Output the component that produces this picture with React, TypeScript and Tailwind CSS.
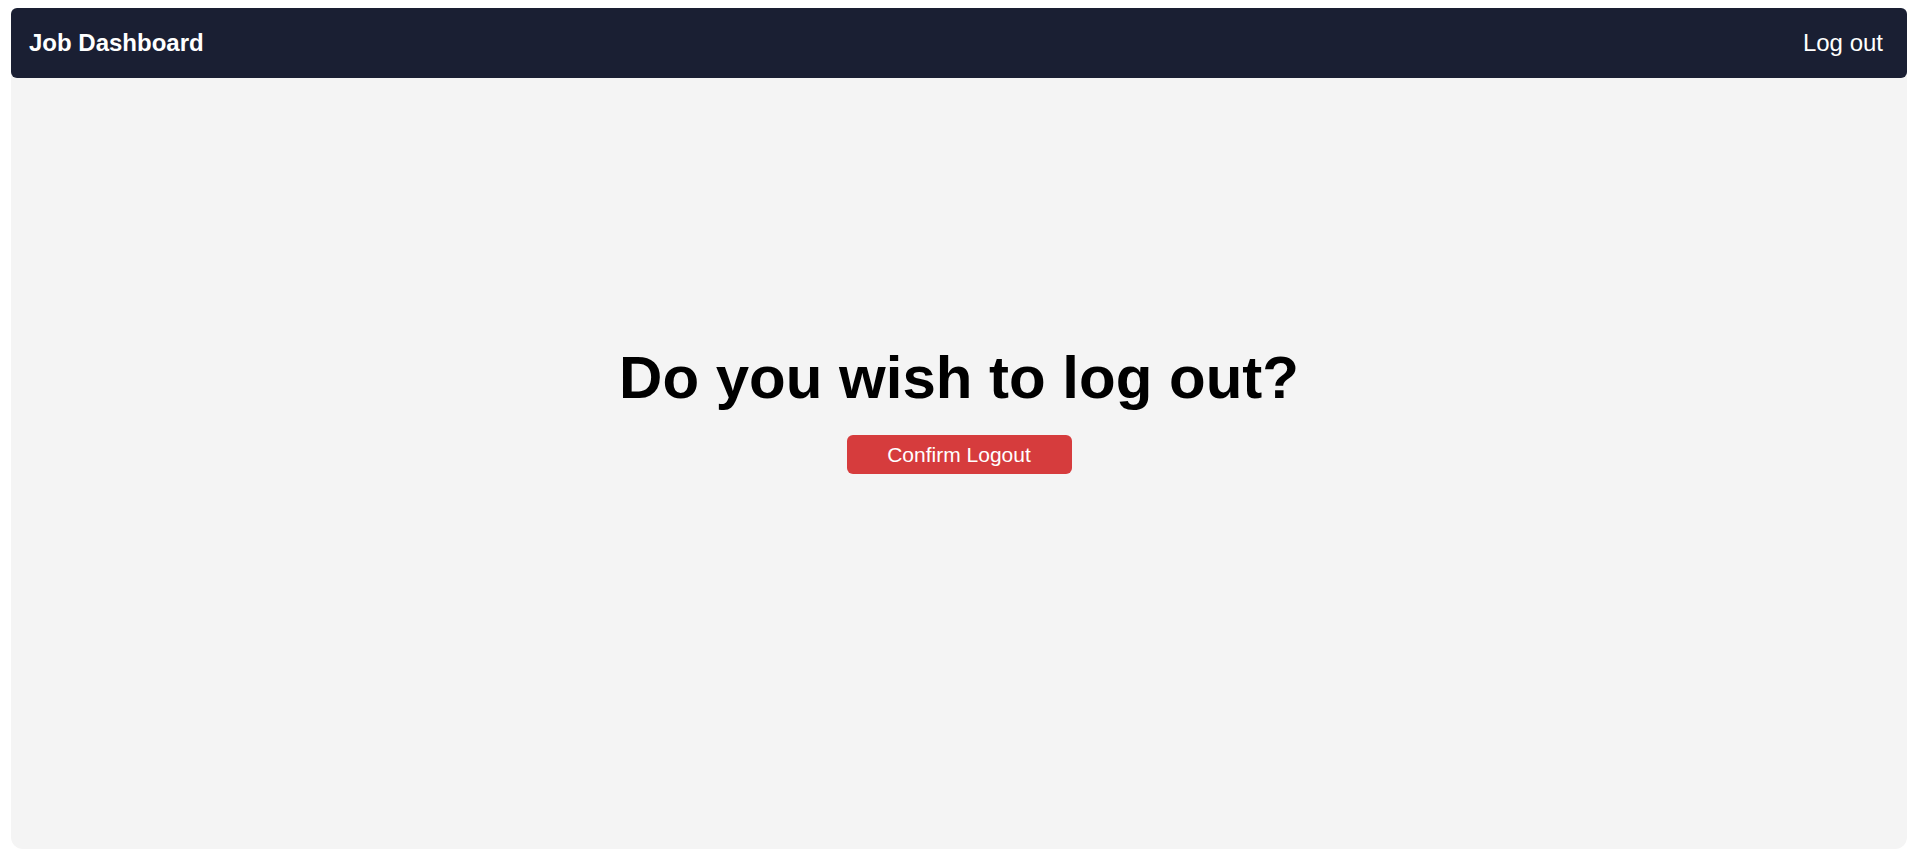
import React from "react";

const App = () => {
  return (
    <div
      className="min-h-screen bg-white pl-[11px] pr-[10px] pt-2 pb-3"
      style={{ fontFamily: '"Liberation Sans", Arial, sans-serif' }}
    >
      <div className="h-[841px] rounded-xl bg-[#f4f4f4] flex flex-col">
        {/* Navbar */}
        <nav className="h-[70px] rounded-md bg-[#1a1f33] flex items-center justify-between pl-[18px] pr-[24px] text-white">
          <span className="text-2xl font-bold">Job Dashboard</span>
          <button className="text-2xl">Log out</button>
        </nav>

        {/* Logout prompt */}
        <div className="flex-1 flex flex-col items-center pt-[270px]">
          <h1 className="text-6xl font-bold text-black">Do you wish to log out?</h1>
          <button className="mt-[27px] w-[225px] h-[39px] rounded-md bg-[#d63c3d] text-white text-[21px]">
            Confirm Logout
          </button>
        </div>
      </div>
    </div>
  );
};

export default App;
